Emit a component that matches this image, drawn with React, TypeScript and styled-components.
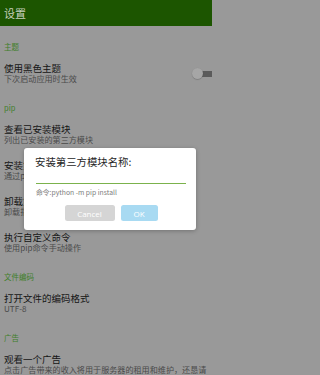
import React from "react";
import styled, { createGlobalStyle } from "styled-components";

const Global = createGlobalStyle`
  html, body { margin: 0; padding: 0; background: #999999; }
  body { font-family: "Noto Sans CJK SC", "Noto Sans", sans-serif; }
  * { box-sizing: border-box; }
`;

const Page = styled.div`
  position: relative;
  width: 212px;
  height: 375px;
  overflow: hidden;
  background: #999999;
`;

const Toolbar = styled.div`
  height: 26px;
  background: #1c5500;
  display: flex;
  align-items: center;
  padding-left: 4px;
  color: #c6cfbd;
  font-size: 11px;
  line-height: 12px;
`;

const Section = styled.div<{ $first?: boolean }>`
  display: flex;
  flex-direction: column;
  padding-top: ${(p) => (p.$first ? 16 : 11)}px;
`;

const Header = styled.div`
  padding: 0 4px 4px;
  font-size: 7.5px;
  line-height: 10px;
  height: 14px;
  color: #3f7f2a;
`;

const Item = styled.div`
  display: flex;
  align-items: center;
  justify-content: space-between;
  padding: 7px 0 8px 4px;
  min-height: 36px;
`;

const Texts = styled.div`
  display: flex;
  flex-direction: column;
  gap: 1px;
  min-width: 0;
  padding-right: 1px;
`;

const Title = styled.div`
  font-size: 9.5px;
  line-height: 10px;
  color: #151515;
  white-space: nowrap;
`;

const Sub = styled.div`
  font-size: 8.1px;
  line-height: 10px;
  color: #4a4a4a;
`;

const Toggle = styled.div`
  position: relative;
  width: 20px;
  height: 12px;
  flex: none;
`;

const Track = styled.div`
  position: absolute;
  left: 3px;
  top: 3px;
  width: 20px;
  height: 6px;
  border-radius: 3px;
  background: #5b5b5b;
`;

const Thumb = styled.div`
  position: absolute;
  left: 0;
  top: 0.5px;
  width: 11px;
  height: 11px;
  border-radius: 50%;
  background: #a6a6a6;
  box-shadow: 0 0.5px 1px rgba(0, 0, 0, 0.3);
`;

const Dialog = styled.div`
  position: absolute;
  left: 24px;
  top: 148px;
  width: 172px;
  height: 82px;
  background: #ffffff;
  border-radius: 3px;
  display: flex;
  flex-direction: column;
  padding: 8px 10px 0 11px;
  box-shadow: 0 1px 4px rgba(0, 0, 0, 0.25);
`;

const DialogTitle = styled.div`
  font-size: 10.4px;
  line-height: 12px;
  color: #262626;
`;

const Input = styled.div`
  margin-top: 15px;
  margin-left: 1px;
  height: 1px;
  background: #7bb24c;
`;

const Hint = styled.div`
  margin-top: 4px;
  margin-left: 1px;
  font-size: 6.8px;
  line-height: 8px;
  color: #7d7d7d;
`;

const Buttons = styled.div`
  margin-top: 9px;
  display: flex;
  justify-content: center;
  gap: 6px;
  padding-left: 1px;
`;

const Btn = styled.div<{ $bg: string; $w: number }>`
  width: ${(p) => p.$w}px;
  height: 16px;
  border-radius: 2.5px;
  background: ${(p) => p.$bg};
  color: #ffffff;
  font-family: "Open Sans", "Noto Sans", sans-serif;
  font-size: 8px;
  display: flex;
  align-items: center;
  justify-content: center;
`;

type Row = { title: string; sub: string; toggle?: boolean };

const sections: { header: string; rows: Row[] }[] = [
  { header: "主题", rows: [{ title: "使用黑色主题", sub: "下次启动应用时生效", toggle: true }] },
  {
    header: "pip",
    rows: [
      { title: "查看已安装模块", sub: "列出已安装的第三方模块" },
      { title: "安装第三方模块", sub: "通过pip安装第三方模块" },
      { title: "卸载第三方模块", sub: "卸载指定的第三方模块" },
      { title: "执行自定义命令", sub: "使用pip命令手动操作" },
    ],
  },
  { header: "文件编码", rows: [{ title: "打开文件的编码格式", sub: "UTF-8" }] },
  {
    header: "广告",
    rows: [
      {
        title: "观看一个广告",
        sub: "点击广告带来的收入将用于服务器的租用和维护，还恳请大家多多支持",
      },
    ],
  },
];

export default function App() {
  return (
    <Page>
      <Global />
      <Toolbar>设置</Toolbar>
      {sections.map((s, i) => (
        <Section key={s.header} $first={i === 0}>
          <Header>{s.header}</Header>
          {s.rows.map((r) => (
            <Item key={r.title}>
              <Texts>
                <Title>{r.title}</Title>
                <Sub>{r.sub}</Sub>
              </Texts>
              {r.toggle && (
                <Toggle>
                  <Track />
                  <Thumb />
                </Toggle>
              )}
            </Item>
          ))}
        </Section>
      ))}
      <Dialog>
        <DialogTitle>安装第三方模块名称:</DialogTitle>
        <Input />
        <Hint>命令:python -m pip install</Hint>
        <Buttons>
          <Btn $bg="#d5d5d5" $w={50}>Cancel</Btn>
          <Btn $bg="#a8daf2" $w={37}>OK</Btn>
        </Buttons>
      </Dialog>
    </Page>
  );
}
